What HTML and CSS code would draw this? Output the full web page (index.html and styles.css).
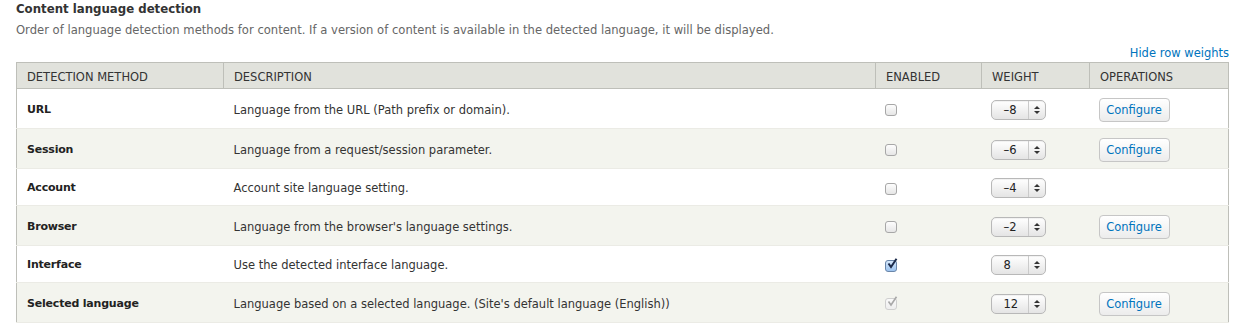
FILE: index.html
```html
<!DOCTYPE html>
<html>
<head>
<meta charset="utf-8">
<link rel="stylesheet" href="styles.css">
</head>
<body>
<div class="page">
  <h2 class="title">Content language detection</h2>
  <p class="desc">Order of language detection methods for content. If a version of content is available in the detected language, it will be displayed.</p>
  <div class="toggle-row"><a class="toggle" href="#">Hide row weights</a></div>
  <table class="methods">
    <colgroup>
      <col class="c1"><col class="c2"><col class="c3"><col class="c4"><col class="c5">
    </colgroup>
    <thead>
      <tr><th>Detection method</th><th>Description</th><th>Enabled</th><th>Weight</th><th>Operations</th></tr>
    </thead>
    <tbody>
      <tr class="odd tall">
        <td class="name">URL</td>
        <td>Language from the URL (Path prefix or domain).</td>
        <td><span class="cb"></span></td>
        <td><span class="sel"><span class="val">–8</span><span class="arr"><i class="up"></i><i class="dn"></i></span></span></td>
        <td><span class="btn">Configure</span></td>
      </tr>
      <tr class="even tall">
        <td class="name">Session</td>
        <td>Language from a request/session parameter.</td>
        <td><span class="cb"></span></td>
        <td><span class="sel"><span class="val">–6</span><span class="arr"><i class="up"></i><i class="dn"></i></span></span></td>
        <td><span class="btn">Configure</span></td>
      </tr>
      <tr class="odd short">
        <td class="name">Account</td>
        <td>Account site language setting.</td>
        <td><span class="cb"></span></td>
        <td><span class="sel"><span class="val">–4</span><span class="arr"><i class="up"></i><i class="dn"></i></span></span></td>
        <td></td>
      </tr>
      <tr class="even tall">
        <td class="name">Browser</td>
        <td>Language from the browser's language settings.</td>
        <td><span class="cb"></span></td>
        <td><span class="sel"><span class="val">–2</span><span class="arr"><i class="up"></i><i class="dn"></i></span></span></td>
        <td><span class="btn">Configure</span></td>
      </tr>
      <tr class="odd short">
        <td class="name">Interface</td>
        <td>Use the detected interface language.</td>
        <td><span class="cb checked"><svg viewBox="0 0 12 12" width="12" height="12"><path d="M2.5 5.5 L5 9 L10.5 0.8" fill="none" stroke="#1b2a4a" stroke-width="2"/></svg></span></td>
        <td><span class="sel"><span class="val">8</span><span class="arr"><i class="up"></i><i class="dn"></i></span></span></td>
        <td></td>
      </tr>
      <tr class="even tall">
        <td class="name">Selected language</td>
        <td>Language based on a selected language. (Site's default language (English))</td>
        <td><span class="cb disabled"><svg viewBox="0 0 12 12" width="12" height="12"><path d="M2.5 5.5 L5 9 L10.5 0.8" fill="none" stroke="#a8a8a8" stroke-width="1.6"/></svg></span></td>
        <td><span class="sel"><span class="val">12</span><span class="arr"><i class="up"></i><i class="dn"></i></span></span></td>
        <td><span class="btn">Configure</span></td>
      </tr>
    </tbody>
  </table>
</div>
</body>
</html>
```
FILE: styles.css
```css
html, body {
  margin: 0;
  padding: 0;
  background: #fff;
}
body {
  font-family: "DejaVu Sans", "Liberation Sans", sans-serif;
  font-size: 11.5px;
  color: #333;
}
.page {
  padding: 1px 15px 0 16px;
}
.title {
  margin: 0;
  font-size: 11.75px;
  font-weight: bold;
  line-height: 16px;
  color: #333;
}
.desc {
  margin: 5px 0 0;
  font-size: 11.58px;
  line-height: 16px;
  color: #666;
}
.toggle-row {
  display: flex;
  justify-content: flex-end;
  margin-top: 7px;
  height: 16px;
  line-height: 16px;
}
.toggle {
  color: #0074bd;
  text-decoration: none;
  font-size: 11.5px;
}
.methods {
  width: 1213px;
  margin-top: 1px;
  border-collapse: collapse;
  table-layout: fixed;
  border: 1px solid #bebfb9;
}
.c1 { width: 207px; }
.c2 { width: 652px; }
.c3 { width: 106px; }
.c4 { width: 108px; }
.c5 { width: 139px; }
.methods thead tr { height: 26px; }
.methods th {
  background: #e1e2dc;
  border: 1px solid #bebfb9;
  text-align: left;
  font-weight: normal;
  text-transform: uppercase;
  color: #333;
  padding: 2px 10px 0;
  font-size: 11.5px;
  line-height: 14px;
}
.methods tr.tall { height: 40px; }
.methods tr.short { height: 37px; }
.methods td {
  padding: 2px 10px 0;
  vertical-align: middle;
  color: #333;
  line-height: 14px;
  border-bottom: 1px solid #ebebe5;
}
.methods tr.even td { background: #f3f4ee; }
.methods tr.odd td { background: #fff; }
.methods td.name {
  font-weight: bold;
  font-size: 11px;
  letter-spacing: -0.2px;
  color: #222;
}
.cb {
  display: inline-block;
  width: 10px;
  height: 10px;
  border: 1px solid #a7a7a7;
  border-radius: 3px;
  background: linear-gradient(#fdfdfd, #e6e6e6);
  vertical-align: middle;
  position: relative;
  margin-left: -1px;
}
.cb svg {
  position: absolute;
  left: 0;
  top: -3px;
}
.cb.checked {
  background: linear-gradient(#d6e8fb, #9cc3ef);
  border-color: #6a86a9;
}
.cb.disabled {
  background: linear-gradient(#fafafa, #eeeeee);
  border-color: #cfcfcf;
}
.sel {
  display: inline-flex;
  align-items: stretch;
  width: 53px;
  height: 18px;
  border: 1px solid #b8b8b8;
  border-radius: 5px;
  background: linear-gradient(#ffffff, #e4e4e4);
  vertical-align: middle;
  margin-left: -1px;
  box-shadow: inset 0 1px 1px rgba(0,0,0,0.06);
}
.sel .val {
  width: 36px;
  padding-left: 12px;
  box-sizing: border-box;
  line-height: 18px;
  color: #222;
  font-size: 11.5px;
}
.sel .arr {
  flex: 1;
  border-left: 1px solid #cacaca;
  display: flex;
  flex-direction: column;
  align-items: center;
  justify-content: center;
  gap: 2px;
}
.sel .arr i {
  display: block;
  width: 0;
  height: 0;
  border-left: 3px solid transparent;
  border-right: 3px solid transparent;
}
.sel .arr .up { border-bottom: 3px solid #333; }
.sel .arr .dn { border-top: 3px solid #333; }
.btn {
  display: inline-block;
  box-sizing: border-box;
  width: 71px;
  height: 24px;
  line-height: 22px;
  text-align: center;
  border: 1px solid #c6c6c6;
  border-radius: 4px;
  background: linear-gradient(#ffffff, #ececec);
  color: #0074bd;
  font-size: 11.5px;
  vertical-align: middle;
  margin-left: -1px;
}
```
